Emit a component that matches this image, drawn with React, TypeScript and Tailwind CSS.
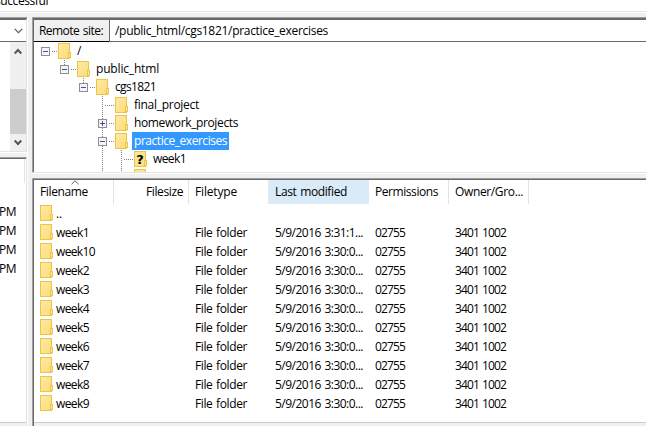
import React, { useLayoutEffect, useRef } from 'react';

// Text run whose letter spacing is adjusted so that it fills the given width.
function Fit({ w, children, className = '' }: { w: number; children: string; className?: string }) {
  const ref = useRef<HTMLSpanElement>(null);
  useLayoutEffect(() => {
    const el = ref.current;
    if (!el) return;
    el.style.letterSpacing = '0px';
    const natural = el.getBoundingClientRect().width;
    el.style.letterSpacing = `${(w - natural) / children.length}px`;
  }, [w, children]);
  return (
    <span ref={ref} className={`inline-block whitespace-pre [word-spacing:1px] ${className}`}>
      {children}
    </span>
  );
}

function Folder({ unknown = false }: { unknown?: boolean }) {
  return (
    <svg width="13" height="16" viewBox="0 0 13 16" className="shrink-0" shapeRendering="crispEdges">
      <defs>
        <linearGradient id="folderFill" x1="0" y1="0" x2="1" y2="1">
          <stop offset="0" stopColor="#ffeaa6" />
          <stop offset="1" stopColor="#fbdc78" />
        </linearGradient>
      </defs>
      <path d="M.5 .5H11.5V15.5H.5Z" fill="url(#folderFill)" stroke="#ebc449" />
      <rect x="10.5" y="9.5" width="2" height="5" fill="#ffe599" stroke="#ebc449" />
      {unknown && (
        <text x="6" y="13" textAnchor="middle" className="fill-black font-['DejaVu_Sans',sans-serif] text-[13px] font-bold">
          ?
        </text>
      )}
    </svg>
  );
}

type Node = { label: string; depth: number; w: number; box?: '+' | '-'; lines?: number[]; tail?: boolean; unknown?: boolean; selected?: boolean };

const tree: Node[] = [
  { label: '/', depth: 0, w: 5, box: '-' },
  { label: 'public_html', depth: 1, w: 63, box: '-' },
  { label: 'cgs1821', depth: 2, w: 41, box: '-' },
  { label: 'final_project', depth: 3, w: 65, tail: true },
  { label: 'homework_projects', depth: 3, w: 104, box: '+', tail: true },
  { label: 'practice_exercises', depth: 3, w: 93, box: '-', tail: true, selected: true },
  { label: 'week1', depth: 4, w: 33, lines: [3], tail: true, unknown: true },
  { label: '', depth: 4, w: 0, lines: [3], tail: true },
];

function Branch({ node }: { node: Node }) {
  const x = node.depth * 19 + 11.5;
  return (
    <svg width={node.depth * 19 + 24} height="18" className="shrink-0" shapeRendering="crispEdges">
      <g stroke="#808080" strokeDasharray="1 1" fill="none">
        {node.lines?.map((d) => <path key={d} d={`M${d * 19 + 11.5} 0V18`} />)}
        {node.depth > 0 && <path d={`M${x} 0V${node.tail ? 18 : 9}`} />}
        <path d={`M${x + (node.box ? 6 : 2)} 9.5H${x + 11.5}`} />
      </g>
      {node.box && (
        <g>
          <rect x={x - 4} y="5.5" width="8" height="8" fill="#f4f4f4" stroke="#8f8f8f" />
          <path d={`M${x - 2.5} 9.5h5`} stroke="#3a55a4" />
          {node.box === '+' && <path d={`M${x} 7v5`} stroke="#3a55a4" />}
        </g>
      )}
    </svg>
  );
}

const files = ['..', 'week1', 'week10', 'week2', 'week3', 'week4', 'week5', 'week6', 'week7', 'week8', 'week9'];
const columns = 'grid grid-cols-[80px_75px_80px_100px_80px_80px]';

function LeftColumn() {
  return (
    <div className="flex w-[28px] shrink-0 flex-col border-r border-white">
      <div className="h-px bg-[#a0a0a0]" />
      <div className="flex h-[134px] flex-col border-r border-b border-[#e3e3e3] border-t-2 border-t-[#696969] bg-white">
        <div className="flex h-[22px] shrink-0 items-center justify-end border-b border-[#696969] pr-[3px]">
          <svg width="9" height="6" viewBox="0 0 9 6" fill="none" stroke="#5a5a5a" strokeWidth="1.2">
            <path d="M.7 .8L4.5 4.6L8.3 .8" />
          </svg>
        </div>
        <div className="ml-[10px] flex w-4 flex-1 flex-col items-center bg-[#f0f0f0]">
          <div className="flex h-[47px] items-start pt-[6px]">
            <svg width="8" height="7" viewBox="0 0 8 7" fill="none" stroke="#555" strokeWidth="2">
              <path d="M.7 5.5L4 2L7.3 5.5" />
            </svg>
          </div>
          <div className="h-[45px] w-4 bg-[#cdcdcd]" />
          <div className="h-3 pt-[5px]">
            <svg width="8" height="7" viewBox="0 0 8 7" fill="none" stroke="#555" strokeWidth="2">
              <path d="M.7 1.5L4 5L7.3 1.5" />
            </svg>
          </div>
        </div>
      </div>
      <div className="h-px bg-white" />
      <div className="h-1" />
      <div className="flex flex-1 flex-col border-t border-r border-r-[#e3e3e3] border-t-[#a0a0a0]">
        <div className="flex-1 overflow-hidden border-t border-[#696969] bg-white">
          <div className="h-6 w-[25px] border-r border-[#e3e3e3]" />
          <div className="pt-[19px]">
            {[0, 1, 2, 3].map((i) => (
              <div key={i} className="h-[19px] leading-[19px]">
                <Fit w={17} className="-ml-px">PM</Fit>
              </div>
            ))}
          </div>
        </div>
        <div className="h-1 border-t border-[#cdcdcd]" />
      </div>
    </div>
  );
}

export default function App() {
  return (
    <div className="flex h-[426px] w-[646px] flex-col overflow-hidden bg-[#f0f0f0] font-['Open_Sans','Noto_Sans',sans-serif] text-[12px] text-black">
      <div className="h-3 shrink-0 overflow-hidden border-b border-[#e3e3e3] bg-white">
        <div className="-mt-[7px] -ml-[5px] leading-4">
          <Fit w={53}>successful</Fit>
        </div>
      </div>
      <div className="h-px shrink-0 bg-white" />
      <div className="flex min-h-0 flex-1 pt-1">
        <LeftColumn />
        <div className="flex min-w-0 flex-1 flex-col pl-1">
          <div className="flex h-[156px] flex-col border-t border-b border-l border-t-[#a0a0a0] border-b-[#e3e3e3] border-l-[#a0a0a0]">
            <div className="flex min-h-0 flex-1 flex-col border-t-2 border-l border-[#696969] bg-white">
              <div className="flex h-[22px] shrink-0 leading-[21px]">
                <div className="w-[75px] border-b border-black bg-[#f0f0f0] pl-[5px]">
                  <Fit w={64}>Remote site:</Fit>
                </div>
                <div className="flex-1 border-b border-l border-[#696969] pl-[5px]">
                  <Fit w={213}>/public_html/cgs1821/practice_exercises</Fit>
                </div>
              </div>
              <div className="min-h-0 flex-1 overflow-hidden">
                {tree.map((n, i) => (
                  <div key={i} className="flex h-[18px] items-center leading-[18px]">
                    <Branch node={n} />
                    <Folder unknown={n.unknown} />
                    {n.label && (
                      <div className={`ml-1 h-[18px] px-[2px] ${n.selected ? 'w-[97px] bg-[#3399ff] text-white' : ''}`}>
                        <Fit w={n.w}>{n.label}</Fit>
                      </div>
                    )}
                  </div>
                ))}
              </div>
            </div>
          </div>
          <div className="h-px bg-white" />
          <div className="h-1" />
          <div className="flex min-h-0 flex-1 flex-col border-t border-l border-[#a0a0a0]">
            <div className="flex flex-1 flex-col border-t border-l border-[#696969]">
              <div className="flex-1 bg-white">
                <div className={`${columns} relative h-6 leading-6`}>
                  <div className="border-r border-[#e3e3e3] pl-[6px]"><Fit w={48}>Filename</Fit></div>
                  <div className="border-r border-[#e3e3e3] pr-[5px] text-right"><Fit w={37}>Filesize</Fit></div>
                  <div className="pl-[6px]"><Fit w={42}>Filetype</Fit></div>
                  <div className="-ml-px w-[101px] bg-[#d9ebf9] pl-[7px]"><Fit w={72}>Last modified</Fit></div>
                  <div className="border-r border-[#e3e3e3] pl-[6px]"><Fit w={63}>Permissions</Fit></div>
                  <div className="border-r border-[#e3e3e3] pl-[6px]"><Fit w={68}>Owner/Gro...</Fit></div>
                  <svg className="absolute top-0 left-[37px]" width="8" height="5" fill="none" stroke="#606060">
                    <path d="M.5 4.2L4 .8L7.5 4.2" />
                  </svg>
                </div>
                {files.map((name, i) => (
                  <div key={name} className={`${columns} h-[19px] leading-[19px]`}>
                    <div className="flex items-start gap-[3px] pl-[6px]">
                      <div className="pt-px">
                        <Folder />
                      </div>
                      <Fit w={i === 0 ? 6 : name.length === 6 ? 39 : 33}>{name}</Fit>
                    </div>
                    {i > 0 && (
                      <>
                        <div />
                        <div className="pl-[6px]"><Fit w={52}>File folder</Fit></div>
                        <div className="pl-[6px]"><Fit w={88}>{i === 1 ? '5/9/2016 3:31:1...' : '5/9/2016 3:30:0...'}</Fit></div>
                        <div className="pl-[6px]"><Fit w={30}>02755</Fit></div>
                        <div className="pl-[6px]"><Fit w={51}>3401 1002</Fit></div>
                      </>
                    )}
                  </div>
                ))}
              </div>
              <div className="h-1 border-t border-[#cdcdcd]" />
            </div>
          </div>
        </div>
      </div>
    </div>
  );
}
